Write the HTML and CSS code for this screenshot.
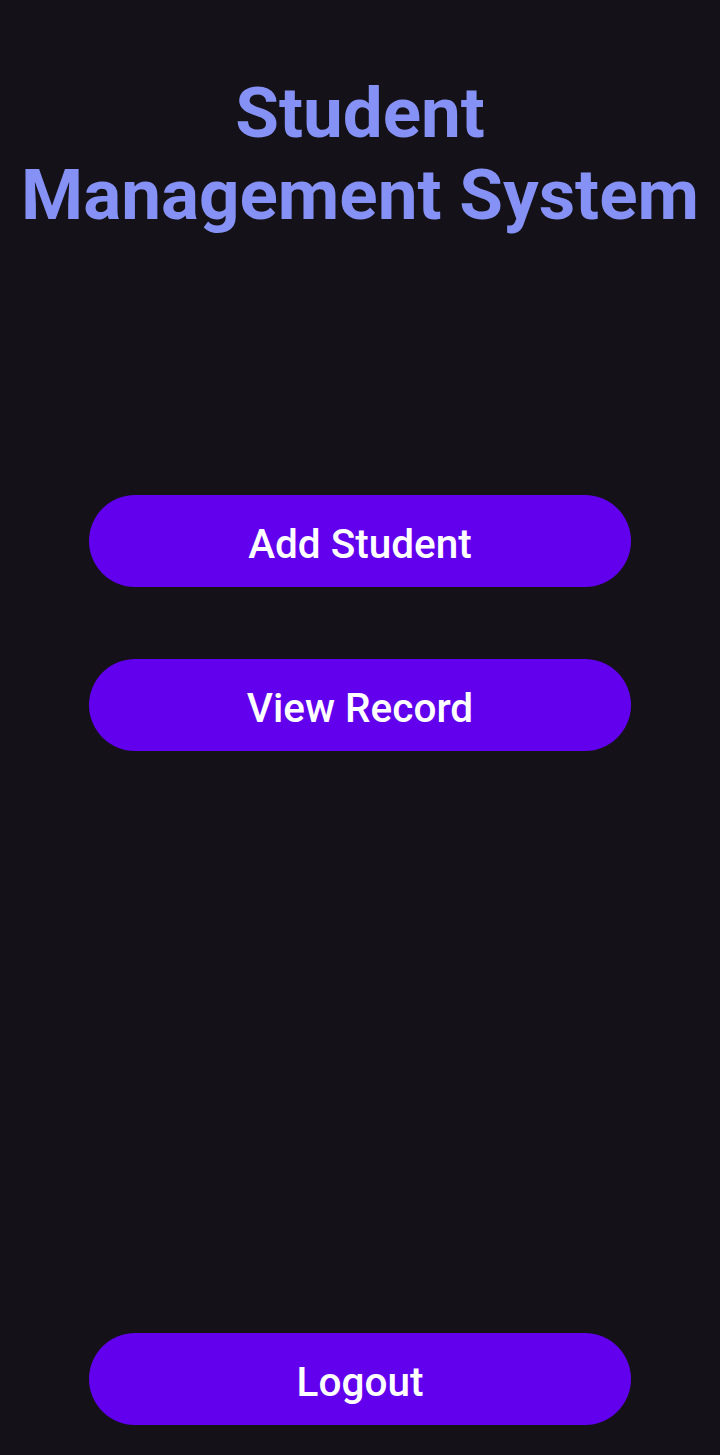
FILE: index.html
```html
<!DOCTYPE html>
<html>
<head>
<meta charset="utf-8">
<link rel="stylesheet" href="styles.css">
</head>
<body>
<div class="screen">
  <h1 class="title">Student<br>Management System</h1>
  <div class="actions">
    <button class="btn">Add Student</button>
    <button class="btn">View Record</button>
  </div>
  <div class="spacer"></div>
  <button class="btn">Logout</button>
</div>
</body>
</html>
```
FILE: styles.css
```css
html, body {
  margin: 0;
  padding: 0;
  background: #141218;
}
.screen {
  width: 720px;
  height: 1455px;
  display: flex;
  flex-direction: column;
  align-items: center;
  box-sizing: border-box;
  padding: 72px 0 30px;
  font-family: Roboto, "Liberation Sans", sans-serif;
}
.title {
  margin: 0;
  text-align: center;
  color: #8591f5;
  font-weight: 700;
  font-size: 71px;
  line-height: 82px;
  letter-spacing: 0;
}
.actions {
  margin-top: 259px;
  display: flex;
  flex-direction: column;
  gap: 72px;
}
.spacer { flex: 1; }
.btn {
  width: 542px;
  height: 92px;
  border: none;
  border-radius: 46px;
  background: #6200ee;
  color: #ffffff;
  font-family: Roboto, "Liberation Sans", sans-serif;
  font-weight: 500;
  font-size: 40.5px;
  padding: 5px 0 0;
}
```
